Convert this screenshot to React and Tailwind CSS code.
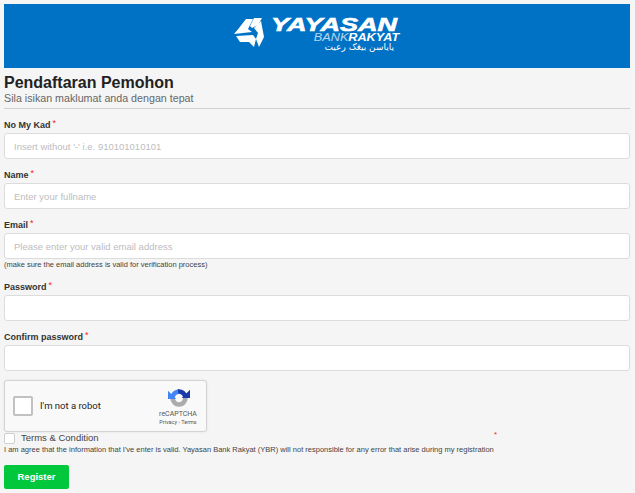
import React from "react";

const fields = [
  { label: "No My Kad", placeholder: "Insert without '-' i.e. 910101010101" },
  { label: "Name", placeholder: "Enter your fullname" },
  { label: "Email", placeholder: "Please enter your valid email address", hint: "(make sure the email address is valid for verification process)" },
  { label: "Password", type: "password" },
  { label: "Confirm password", type: "password" },
];

function Logo() {
  return (
    <div className="flex items-start h-[64px] w-[168px]">
      <svg width="34" height="34" viewBox="6 3 34 34" className="mt-[12px] mr-[4px]" fill="#fff">
        <path d="M19 6 L26 6 L21 16 L25 19 L7 21 L12 15 Z" />
        <path d="M27 5 L35 5 L31 12 L25 15 L23 13 Z" />
        <path d="M34 8 L37 24 L32 34 L29 26 L31 20 L27 15 Z" />
        <path d="M9 23 L26 22 L29 26 L27 34 L22 29 L13 29 Z" />
      </svg>
      <div className="w-[129px] pt-[13px]">
        <div className="w-fit text-[18px] leading-[16px] font-bold italic text-white [-webkit-text-stroke:0.6px_white] scale-x-[1.5] origin-left">
          YAYASAN
        </div>
        <div className="flex justify-end text-[11px] leading-[9px] italic text-white mr-[1px]">
          <div className="scale-x-[1.15] origin-right">
            <span className="opacity-70">BANK</span>
            <span className="font-bold">RAKYAT</span>
          </div>
        </div>
        <div className="text-[9px] leading-[9px] text-white mt-[1px] mr-[6px] text-right [font-family:'DejaVu_Sans',sans-serif]">
          ياياسن بيڠک رعيت
        </div>
      </div>
    </div>
  );
}

function Field({ label, placeholder, hint, type = "text" }) {
  return (
    <div className="mb-[4px]">
      <label className="flex items-start h-[20px] pt-[7px] text-[9px] leading-[11px] font-bold text-[#333]">
        {label}
        <span className="text-[#f5222d] text-[9px] leading-[7px] ml-[2px] font-normal">*</span>
      </label>
      <input
        type={type}
        placeholder={placeholder}
        className="block w-full h-[26px] bg-white border border-[#dcdcdc] rounded-[3px] pl-[9px] text-[9.5px] text-[#333] placeholder:text-[#bdbdbd] outline-none"
      />
      {hint && <p className="text-[7.5px] leading-[10px] pt-[1px] pb-[1px] text-[#444]">{hint}</p>}
    </div>
  );
}

function Captcha() {
  return (
    <div className="flex items-center w-[203px] h-[52px] mt-[9px] bg-[#f9f9f9] border border-[#d3d3d3] rounded-[3px] shadow-[0_0_3px_rgba(0,0,0,0.08)] [font-family:Roboto,sans-serif]">
      <div className="w-[20px] h-[20px] ml-[8px] bg-white border-2 border-[#c1c1c1] rounded-[2px]" />
      <span className="ml-[7px] text-[9.5px] text-[#222]">I'm not a robot</span>
      <div className="ml-auto mr-[7px] w-[42px] flex flex-col items-center">
        <svg width="22" height="22" viewBox="0 0 24 24" fill="none" className="ml-[2px]">
          <path d="M5 12 A7 7 0 0 0 19 12" stroke="#ababab" strokeWidth="5" />
          <path d="M12 5 A7 7 0 0 0 5 12" stroke="#4285f4" strokeWidth="5" />
          <path d="M0 13 L9 13 L0 4 Z" fill="#4285f4" />
          <path d="M11 5 A7 7 0 0 1 19 11" stroke="#1c3aa9" strokeWidth="5" />
          <path d="M15 12 L24 12 L24 3 Z" fill="#1c3aa9" />
        </svg>
        <div className="text-[7px] leading-[8px] text-[#555] mt-[1px]">reCAPTCHA</div>
        <div className="text-[5.5px] leading-[8px] text-[#555] whitespace-nowrap">Privacy - Terms</div>
      </div>
    </div>
  );
}

export default function App() {
  return (
    <div className="w-[635px] h-[493px] overflow-hidden bg-[#f5f5f5] pt-[4px] pl-[4px] pr-[5px] [font-family:'Liberation_Sans',sans-serif]">
      <div className="flex justify-center bg-[#0072c6] h-[64px]">
        <Logo />
      </div>

      <div className="border-b border-[#cfcfcf] h-[41px] pt-[5px] mb-[4px]">
        <h1 className="text-[16px] leading-[19px] font-bold text-[#222]">Pendaftaran Pemohon</h1>
        <p className="text-[10.7px] leading-[12px] text-[#666]">Sila isikan maklumat anda dengan tepat</p>
      </div>

      {fields.map((f) => (
        <Field key={f.label} {...f} />
      ))}

      <Captcha />

      <div className="relative flex items-center h-[12px]">
        <span className="w-[11px] h-[11px] bg-white border border-[#cfcfcf] rounded-[2px]" />
        <span className="ml-[6px] text-[9.5px] text-[#444]">Terms &amp; Condition</span>
        <span className="absolute left-[490px] top-[-3px] text-[#f5222d] text-[8px]">*</span>
      </div>
      <p className="text-[7.5px] leading-[10px] mt-[1px] text-[#444] whitespace-nowrap">
        I am agree that the information that I've enter is valid. Yayasan Bank Rakyat (YBR) will not responsible for any error that arise during my registration
      </p>

      <button className="block mt-[10px] w-[65px] h-[24px] bg-[#00c73c] rounded-[2px] text-white text-[9.5px] font-bold">
        Register
      </button>
    </div>
  );
}
